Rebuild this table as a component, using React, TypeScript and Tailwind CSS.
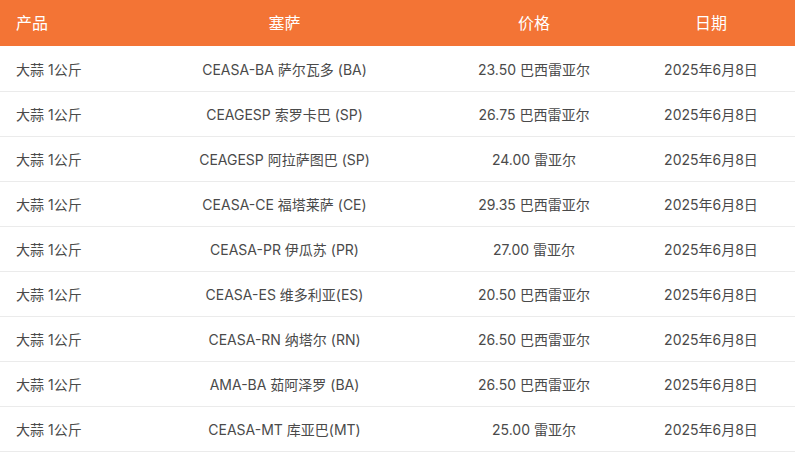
import React from "react";

const rows: [string, string, string, string][] = [
  ["大蒜 1公斤", "CEASA-BA 萨尔瓦多 (BA)", "23.50 巴西雷亚尔", "2025年6月8日"],
  ["大蒜 1公斤", "CEAGESP 索罗卡巴 (SP)", "26.75 巴西雷亚尔", "2025年6月8日"],
  ["大蒜 1公斤", "CEAGESP 阿拉萨图巴 (SP)", "24.00 雷亚尔", "2025年6月8日"],
  ["大蒜 1公斤", "CEASA-CE 福塔莱萨 (CE)", "29.35 巴西雷亚尔", "2025年6月8日"],
  ["大蒜 1公斤", "CEASA-PR 伊瓜苏 (PR)", "27.00 雷亚尔", "2025年6月8日"],
  ["大蒜 1公斤", "CEASA-ES 维多利亚(ES)", "20.50 巴西雷亚尔", "2025年6月8日"],
  ["大蒜 1公斤", "CEASA-RN 纳塔尔 (RN)", "26.50 巴西雷亚尔", "2025年6月8日"],
  ["大蒜 1公斤", "AMA-BA 茹阿泽罗 (BA)", "26.50 巴西雷亚尔", "2025年6月8日"],
  ["大蒜 1公斤", "CEASA-MT 库亚巴(MT)", "25.00 雷亚尔", "2025年6月8日"],
];

export default function App() {
  return (
    <div
      className="w-[795px] bg-white"
      style={{ fontFamily: 'Inter, "Noto Sans CJK SC", sans-serif' }}
    >
      <table className="w-full border-collapse table-fixed">
        <colgroup>
          <col className="w-[128px]" />
          <col className="w-[313px]" />
          <col className="w-[186px]" />
          <col className="w-[168px]" />
        </colgroup>
        <thead>
          <tr className="bg-[#f37435] text-white text-[16px] h-[46px]">
            <th className="text-left font-normal pl-4">产品</th>
            <th className="text-center font-normal">塞萨</th>
            <th className="text-center font-normal">价格</th>
            <th className="text-center font-normal">日期</th>
          </tr>
        </thead>
        <tbody>
          {rows.map((r, i) => (
            <tr key={i} className="h-[45px] border-b border-[#ebebeb] text-[14px] text-[#4a4a4a]">
              <td className="text-left pl-4 pt-[2px]">{r[0]}</td>
              <td className="text-center pt-[2px]">{r[1]}</td>
              <td className="text-center pt-[2px]">{r[2]}</td>
              <td className="text-center pt-[2px]">{r[3]}</td>
            </tr>
          ))}
        </tbody>
      </table>
    </div>
  );
}
